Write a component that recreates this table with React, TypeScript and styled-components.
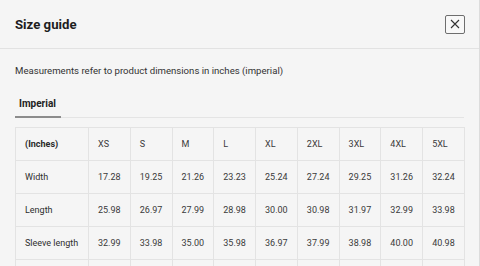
import React from 'react';
import styled, { createGlobalStyle } from 'styled-components';

const GlobalStyle = createGlobalStyle`
    html, body {
        margin: 0;
        padding: 0;
        background: #f4f4f4;
        font-family: Roboto, "Liberation Sans", sans-serif;
        color: #333;
    }
`;

const Dialog = styled.div`
    width: 479px;
    height: 266px;
    overflow: hidden;
    background: #f5f5f5;
    border-right: 1px solid #dcdcdc;
`;

const Header = styled.div`
    height: 48px;
    padding: 0 14px 0 15px;
    display: flex;
    align-items: center;
    justify-content: space-between;
    border-bottom: 1px solid #e2e2e2;
`;

const Title = styled.h2`
    margin: 0;
    font-size: 13.2px;
    font-weight: 700;
    color: #1e1e1e;
`;

const CloseButton = styled.button`
    width: 20px;
    height: 19px;
    padding: 0;
    display: flex;
    align-items: center;
    justify-content: center;
    background: #f8f8f8;
    border: 1px solid #6e6e6e;
    border-radius: 2px;
    color: #333;
`;

const Body = styled.div`
    padding: 16px 15px 0;
`;

const Description = styled.p`
    margin: 0;
    font-size: 9.6px;
    line-height: 12px;
    color: #333;
`;

const TabList = styled.div`
    margin-top: 20px;
    display: flex;
    border-bottom: 1px solid #e4e4e4;
`;

const Tab = styled.div<{ active?: boolean }>`
    padding: 0 5px 5px 4px;
    font-size: 10px;
    line-height: 14px;
    font-weight: 700;
    color: #222;
    border-bottom: 2px solid ${p => (p.active ? '#8c8c8c' : 'transparent')};
    margin-bottom: -1px;
`;

const Table = styled.table`
    margin-top: 9px;
    width: 450px;
    border-collapse: collapse;
    table-layout: fixed;
    font-size: 9px;
    color: #3a3a3a;
`;

const Cell = styled.td<{ head?: boolean }>`
    height: 32px;
    padding: 0 0 0 9px;
    border: 1px solid #e3e3e3;
    font-weight: ${p => (p.head ? 700 : 400)};
    color: ${p => (p.head ? '#2a2a2a' : '#3a3a3a')};
    white-space: nowrap;
`;

const LabelCell = styled(Cell)`
    color: #2e2e2e;
`;

const sizes = ['XS', 'S', 'M', 'L', 'XL', '2XL', '3XL', '4XL', '5XL'];

const rows = [
    { label: 'Width', values: ['17.28', '19.25', '21.26', '23.23', '25.24', '27.24', '29.25', '31.26', '32.24'] },
    { label: 'Length', values: ['25.98', '26.97', '27.99', '28.98', '30.00', '30.98', '31.97', '32.99', '33.98'] },
    { label: 'Sleeve length', values: ['32.99', '33.98', '35.00', '35.98', '36.97', '37.99', '38.98', '40.00', '40.98'] },
];

const CloseIcon = () => (
    <svg width="10" height="10" viewBox="0 0 10 10">
        <path d="M1 1 L9 9 M9 1 L1 9" stroke="#333" strokeWidth="1.1" fill="none" />
    </svg>
);

const App = () => {
    return (
        <Dialog>
            <GlobalStyle />
            <Header>
                <Title>Size guide</Title>
                <CloseButton aria-label="Close">
                    <CloseIcon />
                </CloseButton>
            </Header>
            <Body>
                <Description>Measurements refer to product dimensions in inches (imperial)</Description>
                <TabList>
                    <Tab active>Imperial</Tab>
                </TabList>
                <Table>
                    <colgroup>
                        <col style={{ width: 73 }} />
                        {sizes.map(s => (
                            <col key={s} />
                        ))}
                    </colgroup>
                    <tbody>
                        <tr>
                            <Cell head>(Inches)</Cell>
                            {sizes.map(s => (
                                <Cell key={s}>{s}</Cell>
                            ))}
                        </tr>
                        {rows.map(row => (
                            <tr key={row.label}>
                                <LabelCell>{row.label}</LabelCell>
                                {row.values.map((v, i) => (
                                    <Cell key={i}>{v}</Cell>
                                ))}
                            </tr>
                        ))}
                        <tr>
                            <LabelCell />
                            {sizes.map(s => (
                                <Cell key={s} />
                            ))}
                        </tr>
                    </tbody>
                </Table>
            </Body>
        </Dialog>
    );
};

export default App;
